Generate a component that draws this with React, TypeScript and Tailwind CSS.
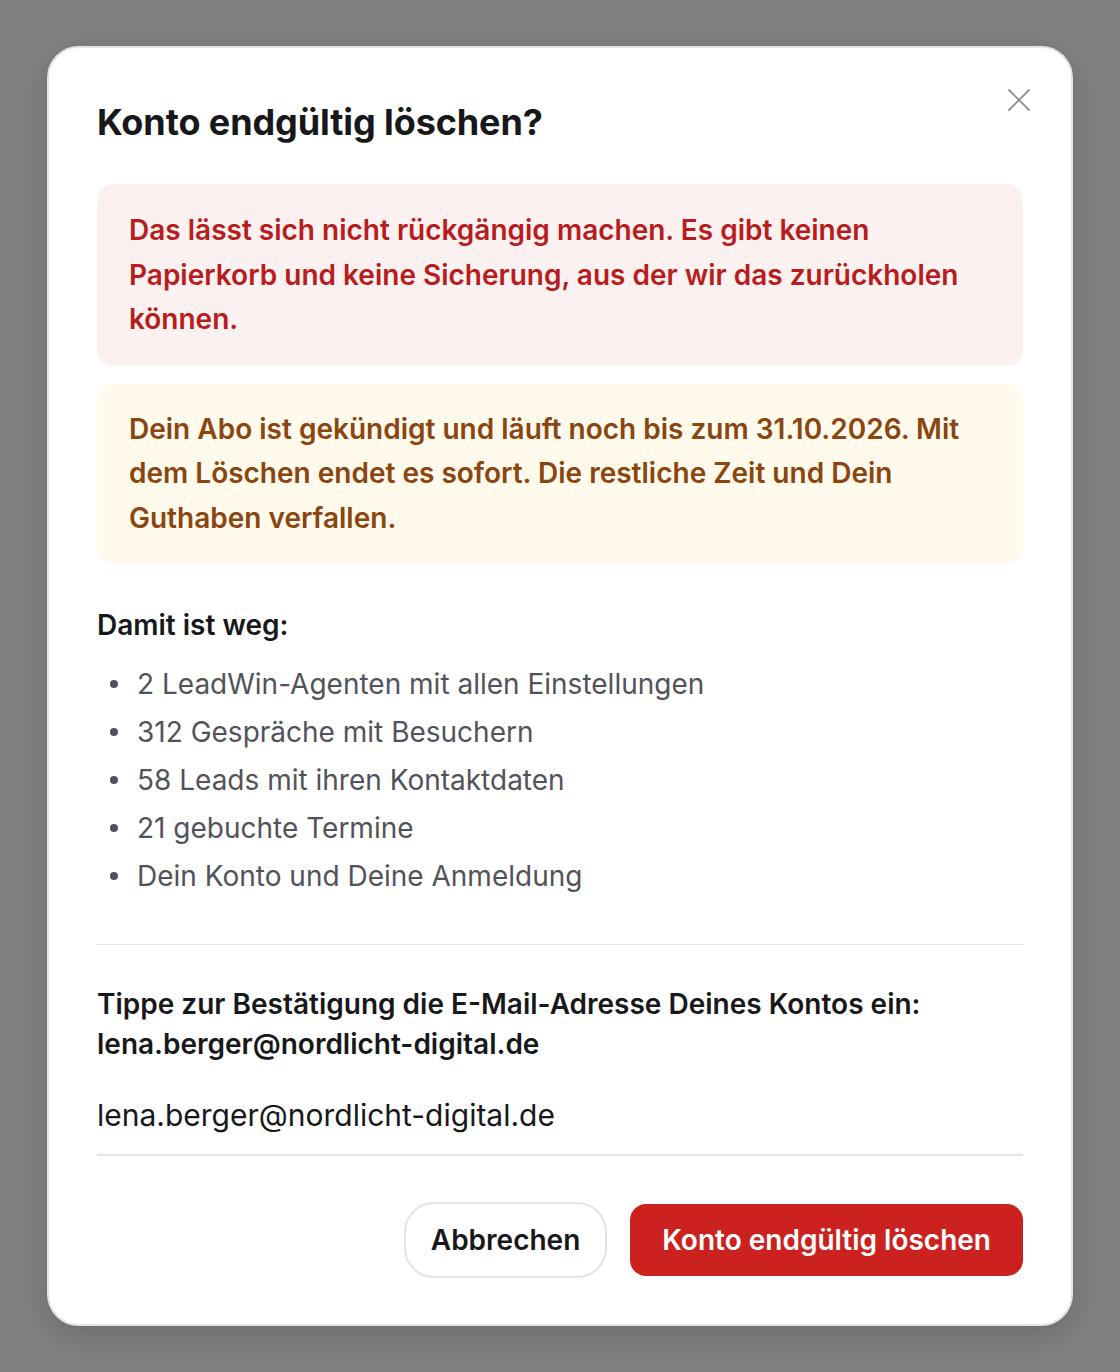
const LOST_ITEMS = [
  "2 LeadWin-Agenten mit allen Einstellungen",
  "312 Gespräche mit Besuchern",
  "58 Leads mit ihren Kontaktdaten",
  "21 gebuchte Termine",
  "Dein Konto und Deine Anmeldung",
];

const EMAIL = "lena.berger@nordlicht-digital.de";

export default function App() {
  return (
    <div
      className="min-h-[1372px] w-full bg-[#808080] flex items-center justify-center px-[47px] py-[46px]"
      style={{ fontFamily: "Inter, 'Noto Sans', sans-serif" }}
    >
      <div className="relative w-full bg-white rounded-[32px] border-2 border-[#e4e4e7] shadow-[0_10px_30px_rgba(0,0,0,0.15)] px-[48px] pt-[50px] pb-[46px]">
        {/* Close */}
        <button className="absolute right-[40px] top-[40px] w-[24px] h-[24px] flex items-center justify-center text-[#8e8e99]">
          <svg width="26" height="26" viewBox="0 0 24 24" fill="none" stroke="currentColor" strokeWidth="1.8" strokeLinecap="round">
            <path d="M2 2 L22 22 M22 2 L2 22" />
          </svg>
        </button>

        <h2 className="text-[36px] font-bold leading-[48px] tracking-[-0.1px] text-[#18181b]">
          Konto endgültig löschen?
        </h2>

        {/* Warnings */}
        <div className="mt-[38px] rounded-[16px] bg-[#fbf1f1] px-[32px] py-[24px]">
          <p className="text-[28px] font-semibold leading-[44.5px] text-[#b91c1c]">
            Das lässt sich nicht rückgängig machen. Es gibt keinen Papierkorb und keine Sicherung, aus der wir das zurückholen können.
          </p>
        </div>

        <div className="mt-[18px] rounded-[16px] bg-[#fffaeb] px-[32px] py-[23px]">
          <p className="text-[28px] font-semibold leading-[44.5px] text-[#8a4510]">
            Dein Abo ist gekündigt und läuft noch bis zum 31.10.2026. Mit dem Löschen endet es sofort. Die restliche Zeit und Dein Guthaben verfallen.
          </p>
        </div>

        {/* Lost */}
        <p className="mt-[40px] text-[28px] font-semibold leading-[44px] text-[#18181b]">Damit ist weg:</p>
        <ul className="mt-[13px] flex flex-col">
          {LOST_ITEMS.map(item => (
            <li key={item} className="flex items-center text-[28px] leading-[48px] text-[#52525b]">
              <span className="w-[8px] h-[8px] rounded-full bg-[#52525b] ml-[13px] mr-[19px] shrink-0" />
              {item}
            </li>
          ))}
        </ul>

        <div className="mt-[44px] border-t border-[#e4e4e7]" />

        {/* Confirm */}
        <p className="mt-[39px] text-[28px] font-semibold leading-[40px] text-[#18181b]">
          Tippe zur Bestätigung die E-Mail-Adresse Deines Kontos ein:
          <br />
          {EMAIL}
        </p>
        <div className="mt-[31px] border-b-2 border-[#e4e4e7] pb-[19px] text-[30px] leading-[40px] text-[#18181b]">
          {EMAIL}
        </div>

        {/* Actions */}
        <div className="mt-[46px] flex justify-end items-center gap-[23px]">
          <button className="h-[76px] px-[25px] rounded-[30px] border-2 border-[#e4e4e7] bg-white text-[28px] font-semibold text-[#18181b]">
            Abbrechen
          </button>
          <button className="h-[72px] px-[32px] rounded-[16px] bg-[#cc221f] text-[28px] font-semibold text-white">
            Konto endgültig löschen
          </button>
        </div>
      </div>
    </div>
  );
}
